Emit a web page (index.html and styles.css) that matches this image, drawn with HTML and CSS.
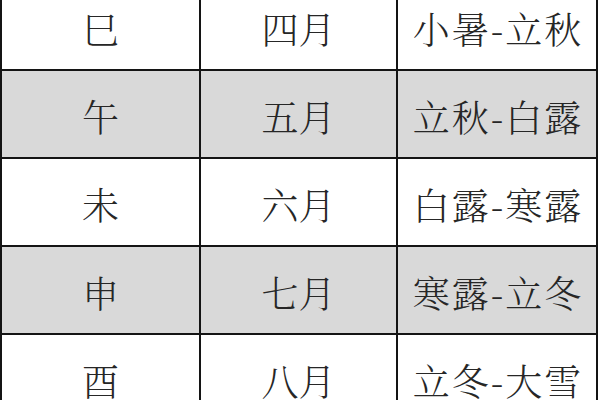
FILE: index.html
```html
<!DOCTYPE html>
<html lang="zh">
<head>
<meta charset="utf-8">
<link rel="stylesheet" href="styles.css">
</head>
<body>
<table class="grid">
  <colgroup><col class="c1"><col class="c2"><col class="c3"></colgroup>
  <tr><td>巳</td><td>四月</td><td class="term">小暑-立秋</td></tr>
  <tr class="alt"><td>午</td><td>五月</td><td class="term">立秋-白露</td></tr>
  <tr><td>未</td><td>六月</td><td class="term">白露-寒露</td></tr>
  <tr class="alt"><td>申</td><td>七月</td><td class="term">寒露-立冬</td></tr>
  <tr><td>酉</td><td>八月</td><td class="term">立冬-大雪</td></tr>
</table>
</body>
</html>
```
FILE: styles.css
```css
html, body {
  margin: 0;
  padding: 0;
  background: #ffffff;
  overflow: hidden;
}
.grid {
  border-collapse: collapse;
  width: 596px;
  margin-top: -19px;
  table-layout: fixed;
  font-family: "Noto Serif CJK SC", "Noto Sans CJK SC", sans-serif;
  font-weight: 300;
  font-size: 37px;
  color: #262626;
}
.c1 { width: 199px; }
.c2 { width: 197px; }
.c3 { width: 200px; }
.grid td {
  border: 2px solid #141414;
  height: 88px;
  padding: 4px 0 0 0;
  text-align: center;
  vertical-align: middle;
  line-height: 1;
  box-sizing: border-box;
}
.grid td.term {
  letter-spacing: 2px;
  text-indent: 2px;
  white-space: nowrap;
}
.grid tr.alt td {
  background: #d9d9d9;
}
```
